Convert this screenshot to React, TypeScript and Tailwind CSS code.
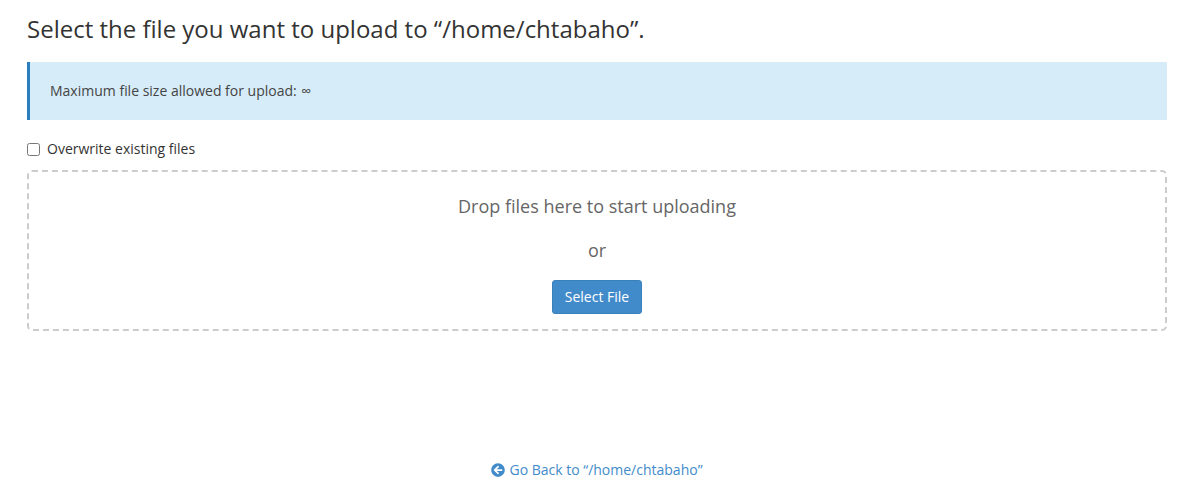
import React from 'react'
import { FaArrowCircleLeft } from 'react-icons/fa'

const font = "font-['Open_Sans',sans-serif]"

export default function App() {
  return (
    <div className={`${font} min-h-[502px] bg-white pl-[27px] pr-[22px] pt-[14px] text-[14px] leading-[20px] text-[#333]`}>
      <h1 className="text-[24px] leading-[30px] text-[#333]">Select the file you want to upload to “/home/chtabaho”.</h1>

      {/* Info notice */}
      <div className="mt-[18px] h-[58px] border-l-[3px] border-[#2a7fc0] bg-[#d6ecf9] pl-[20px] pt-[19px] text-[14px] leading-[20px] text-[#444]">
        Maximum file size allowed for upload: <span className="ml-px">∞</span>
      </div>

      <label className="mt-[19px] flex items-center gap-[7px] leading-[20px]">
        <input type="checkbox" className="m-0 h-[13px] w-[13px]" />
        <span>Overwrite existing files</span>
      </label>

      {/* Drop zone */}
      <div className="mt-[11px] flex h-[161px] flex-col items-center rounded-[5px] border-2 border-dashed border-[#ccc] pt-[22px] text-[18px] leading-[25px] text-[#666]">
        <div>Drop files here to start uploading</div>
        <div className="mt-[19px]">or</div>
        <button className="mt-[17px] h-[34px] w-[90px] rounded-[3px] border border-[#3a80ba] bg-[#428bca] pb-[2px] text-[14px] text-white">
          Select File
        </button>
      </div>

      <div className="mt-[129px] flex items-center justify-center gap-[4px] text-[14px] text-[#428bca]">
        <FaArrowCircleLeft className="h-[14px] w-[14px]" />
        <a>Go Back to “/home/chtabaho”</a>
      </div>
    </div>
  )
}
